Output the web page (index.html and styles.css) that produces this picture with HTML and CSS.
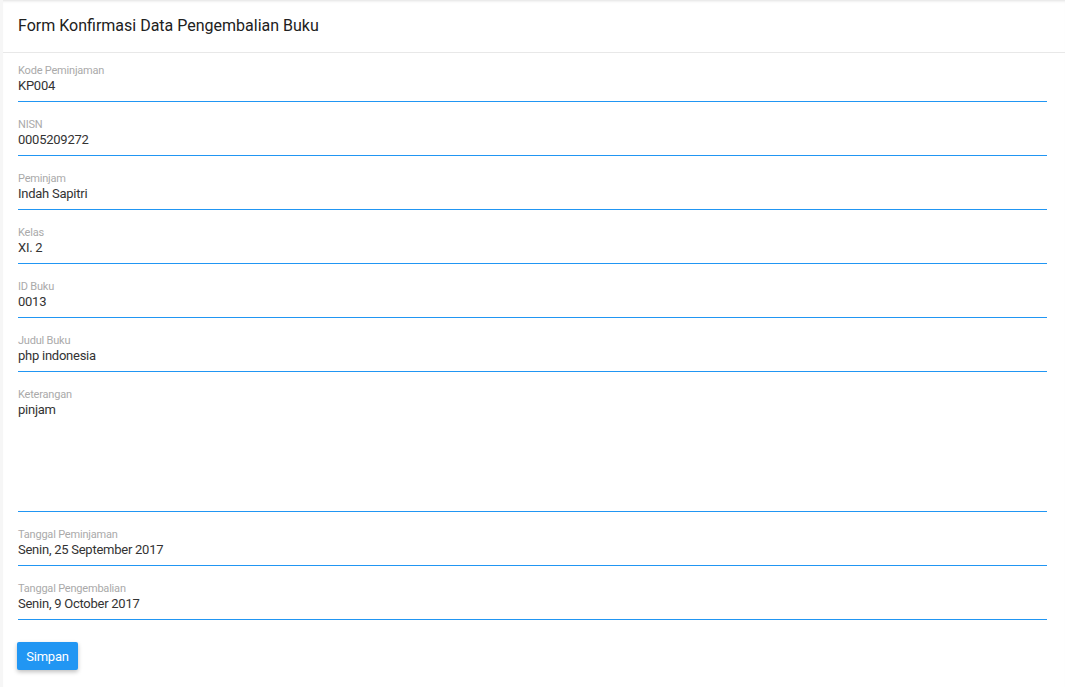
FILE: index.html
```html
<!DOCTYPE html>
<html>
<head>
<meta charset="utf-8">
<link rel="stylesheet" href="styles.css">
</head>
<body>
<div class="page">
  <div class="card">
    <div class="card-header">Form Konfirmasi Data Pengembalian Buku</div>
    <form class="card-body">
      <div class="field"><label>Kode Peminjaman</label><div class="value">KP004</div></div>
      <div class="field"><label>NISN</label><div class="value">0005209272</div></div>
      <div class="field"><label>Peminjam</label><div class="value">Indah Sapitri</div></div>
      <div class="field"><label>Kelas</label><div class="value">XI. 2</div></div>
      <div class="field"><label>ID Buku</label><div class="value">0013</div></div>
      <div class="field"><label>Judul Buku</label><div class="value">php indonesia</div></div>
      <div class="field"><label>Keterangan</label><div class="value area">pinjam</div></div>
      <div class="field"><label>Tanggal Peminjaman</label><div class="value">Senin, 25 September 2017</div></div>
      <div class="field"><label>Tanggal Pengembalian</label><div class="value">Senin, 9 October 2017</div></div>
      <button type="button" class="btn">Simpan</button>
    </form>
  </div>
</div>
</body>
</html>
```
FILE: styles.css
```css
html, body {
  margin: 0;
  padding: 0;
  background: #f6f6f6;
  font-family: Roboto, "Liberation Sans", sans-serif;
}
.page {
  padding-left: 3px;
  height: 687px;
  overflow: hidden;
}
.card {
  background: #fff;
  min-height: 687px;
  box-shadow: inset 0 3px 3px -2px rgba(0,0,0,0.12);
}
.card-header {
  padding: 16px 15px;
  font-size: 16px;
  line-height: 20px;
  color: #212121;
  border-bottom: 1px solid #e8e8e8;
}
.card-body {
  padding: 10px 18px 0 15px;
  display: flex;
  flex-direction: column;
}
.field {
  display: flex;
  flex-direction: column;
  border-bottom: 1px solid #2196f3;
  margin-bottom: 15px;
}
.field label {
  font-size: 11px;
  line-height: 13px;
  padding-top: 1px;
  letter-spacing: -0.2px;
  color: #aaaaaa;
}
.value {
  font-size: 13px;
  line-height: 18px;
  letter-spacing: -0.25px;
  color: #333;
  padding-bottom: 6px;
}
.value.area {
  height: 104px;
}
.btn {
  align-self: flex-start;
  margin-top: 7px;
  margin-left: -1px;
  width: 61px;
  height: 28px;
  border: none;
  border-radius: 2px;
  background: #2196f3;
  color: #fff;
  font-family: Roboto, "Liberation Sans", sans-serif;
  font-size: 13px;
  letter-spacing: -0.2px;
  padding: 0;
  box-shadow: 0 2px 4px rgba(0,0,0,0.25);
}
```
